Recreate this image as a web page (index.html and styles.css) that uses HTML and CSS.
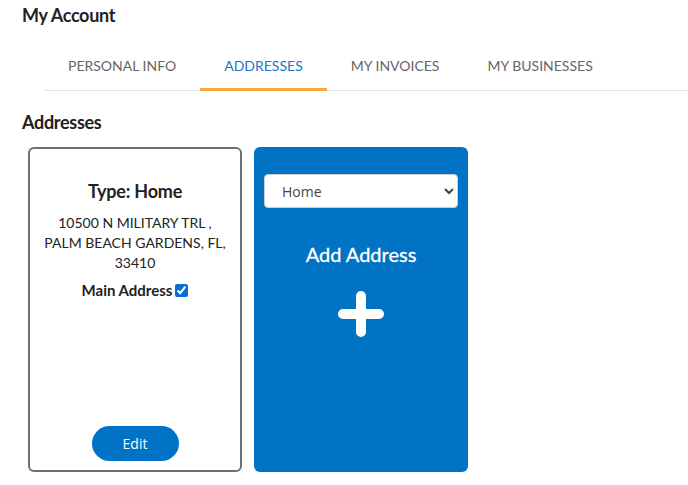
FILE: index.html
```html
<!DOCTYPE html>
<html>
<head>
<meta charset="utf-8">
<link rel="stylesheet" href="styles.css">
</head>
<body>
<div class="page">
  <h1 class="title">My Account</h1>
  <nav class="tabs">
    <a class="tab">PERSONAL INFO</a>
    <a class="tab active">ADDRESSES</a>
    <a class="tab">MY INVOICES</a>
    <a class="tab">MY BUSINESSES</a>
  </nav>
  <h2 class="section">Addresses</h2>
  <div class="cards">
    <div class="card addr">
      <div class="type">Type: Home</div>
      <div class="lines">10500 N MILITARY TRL ,<br>PALM BEACH GARDENS, FL,<br>33410</div>
      <label class="main">Main Address <input type="checkbox" checked></label>
      <button class="edit">Edit</button>
    </div>
    <div class="card add">
      <select class="kind">
        <option>Home</option>
        <option>Work</option>
      </select>
      <div class="addtitle">Add Address</div>
      <svg class="plus" width="46" height="46" viewBox="0 0 46 46">
        <path d="M23 5 V41 M5 23 H41" stroke="#fff" stroke-width="10" stroke-linecap="round" fill="none"/>
      </svg>
    </div>
  </div>
</div>
</body>
</html>
```
FILE: styles.css
```css
html, body {
  margin: 0;
  padding: 0;
  background: #fff;
}
.page {
  font-family: Lato, "Liberation Sans", sans-serif;
  color: #222;
  padding-left: 22px;
}
.title {
  margin: 0;
  padding-top: 4px;
  font-size: 18px;
  line-height: 22px;
  font-weight: 700;
  letter-spacing: -0.3px;
}
.tabs {
  display: flex;
  margin-left: 22px;
  margin-top: 17px;
  border-bottom: 1px solid #e2e2e2;
}
.tab {
  display: block;
  padding: 0 24px;
  height: 45px;
  line-height: 46px;
  font-size: 14px;
  color: #666;
  border-bottom: 3px solid transparent;
  margin-bottom: -1px;
}
.tab.active {
  color: #1a76c9;
  border-bottom-color: #f8a640;
}
.section {
  margin: 20px 0 0 0;
  font-size: 18px;
  line-height: 22px;
  font-weight: 700;
  letter-spacing: -0.3px;
}
.cards {
  display: flex;
  gap: 12px;
  margin-left: 6px;
  margin-top: 14px;
}
.card {
  box-sizing: border-box;
  width: 214px;
  height: 325px;
  border-radius: 6px;
  display: flex;
  flex-direction: column;
  align-items: center;
}
.addr {
  border: 2px solid #707070;
  padding: 30px 8px 9px;
  text-align: center;
}
.type {
  font-size: 18px;
  font-weight: 700;
  line-height: 24px;
  letter-spacing: -0.2px;
}
.lines {
  margin-top: 10px;
  font-size: 14px;
  line-height: 20px;
  color: #222;
}
.main {
  margin-top: 7px;
  font-size: 15px;
  font-weight: 700;
  line-height: 20px;
  display: flex;
  align-items: center;
  gap: 3px;
}
.main input {
  margin: 0;
  width: 13px;
  height: 13px;
  accent-color: #0a6fd0;
}
.edit {
  margin-top: auto;
  width: 87px;
  height: 35px;
  border: none;
  border-radius: 18px;
  background: #0073c4;
  color: #fff;
  font-family: "Open Sans", "Liberation Sans", sans-serif;
  font-size: 14px;
}
.add {
  background: #0073c4;
  padding: 27px 10px 0;
}
.kind {
  width: 194px;
  height: 34px;
  border: 1px solid #ccc;
  border-radius: 4px;
  background: #fff;
  padding: 0 0 0 13px;
  font-family: "Open Sans", "Liberation Sans", sans-serif;
  font-size: 14px;
  color: #444;
}
.addtitle {
  margin-top: 34px;
  color: #fff;
  font-size: 20px;
  line-height: 24px;
  -webkit-text-stroke: 0.3px #fff;
}
.plus {
  margin-top: 25px;
  display: block;
}
```
